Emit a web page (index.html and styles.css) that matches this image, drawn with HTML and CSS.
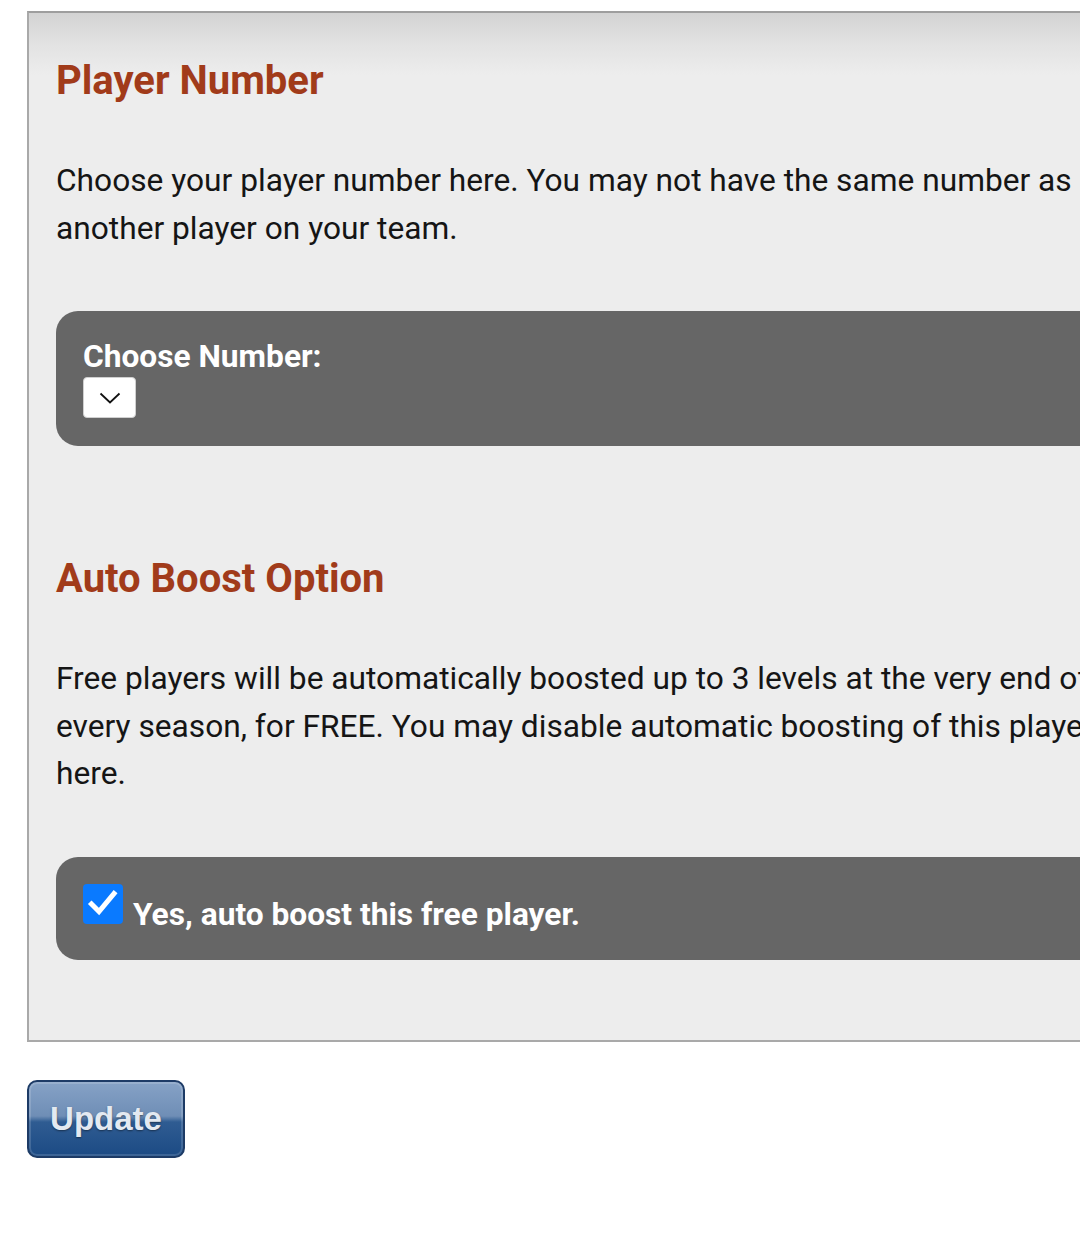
FILE: index.html
```html
<!DOCTYPE html>
<html>
<head>
<meta charset="utf-8">
<link rel="stylesheet" href="styles.css">
</head>
<body>
<form class="page">
  <div class="panel">
    <h2 class="title">Player Number</h2>
    <p class="text">Choose your player number here. You may not have the same number as another player on your team.</p>
    <div class="box box-select">
      <label class="label">Choose Number:</label>
      <div class="select">
        <svg width="22" height="12" viewBox="0 0 22 12"><path d="M1.5 1.5 L11 10.5 L20.5 1.5" fill="none" stroke="#111" stroke-width="1.8"/></svg>
      </div>
    </div>
    <h2 class="title title-2">Auto Boost Option</h2>
    <p class="text text-2">Free players will be automatically boosted up to 3 levels at the very end of every season, for FREE. You may disable automatic boosting of this player here.</p>
    <div class="box box-check">
      <span class="check">
        <svg width="40" height="40" viewBox="0 0 40 40"><path d="M8.5 20 L16 27.5 L31 9.5" fill="none" stroke="#fff" stroke-width="5" stroke-linecap="square"/></svg>
      </span>
      <span class="check-label">Yes, auto boost this free player.</span>
    </div>
  </div>
  <button type="button" class="update">Update</button>
</form>
</body>
</html>
```
FILE: styles.css
```css
html, body {
  margin: 0;
  padding: 0;
  overflow: hidden;
  background: #fff;
}
body {
  font-family: Roboto, "Liberation Sans", sans-serif;
  color: #111;
}
.page {
  padding: 11px 0 0 27px;
  width: 1180px;
}
.panel {
  border: 2px solid #a9a9a9;
  border-top-color: #9e9e9e;
  background: linear-gradient(#d3d3d3 0px, #e2e2e2 30px, #ededed 62px, #ededed 100%);
  padding: 45px 0 80px 27px;
  width: 1120px;
}
.title {
  margin: 0;
  font-size: 40px;
  line-height: 46px;
  font-weight: 700;
  color: #a13b1a;
}
.title-2 {
  margin-top: 110px;
}
.text {
  margin: 53px 0 0 0;
  font-size: 31.7px;
  line-height: 47.6px;
  width: 1075px;
  color: #151515;
}
.text-2 {
  margin-top: 53px;
}
.box {
  margin-top: 59px;
  background: #666;
  border-radius: 22px 0 0 22px;
  color: #fff;
}
.box-select {
  padding: 28px 0 28px 27px;
}
.label {
  display: block;
  font-size: 31.7px;
  line-height: 36px;
  font-weight: 700;
  margin-bottom: 2px;
}
.select {
  width: 53px;
  height: 41px;
  background: #fff;
  border-radius: 4px;
  box-sizing: border-box;
  border: 1px solid #d0d0d0;
  display: flex;
  align-items: center;
  justify-content: center;
  padding-top: 1px;
}
.box-check {
  margin-top: 59px;
  padding: 27px 0 27px 27px;
  display: flex;
  align-items: flex-start;
  gap: 10px;
}
.check {
  width: 40px;
  height: 40px;
  background: #0a7aff;
  border-radius: 4px;
  display: block;
  flex: none;
}
.check svg { display: block; }
.check-label {
  font-size: 31.7px;
  line-height: 36px;
  font-weight: 700;
  padding-top: 13px;
}
.update {
  margin-top: 38px;
  width: 158px;
  height: 78px;
  border: 2px solid #1d3b66;
  border-radius: 10px;
  background: linear-gradient(#86a2c6 0%, #6f8eb6 46%, #2f5c92 54%, #1c4b84 100%);
  box-shadow: inset 0 0 0 2px rgba(255,255,255,0.15);
  color: #e3e9f1;
  font-family: "Liberation Sans", Arial, sans-serif;
  font-weight: 700;
  font-size: 33px;
  text-shadow: 0 1px 2px rgba(0,0,0,0.45);
  padding: 0;
  display: block;
}
```
